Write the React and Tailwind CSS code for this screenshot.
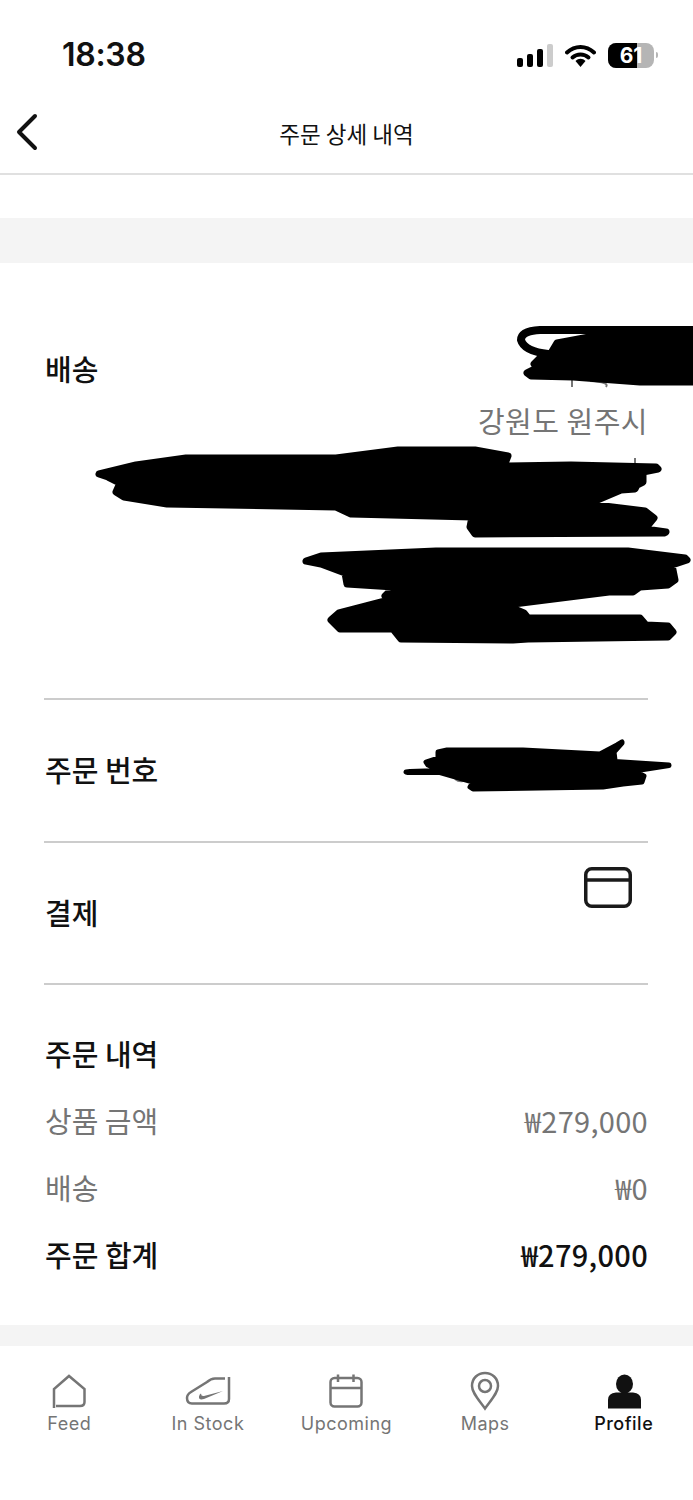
const gray = "#757575";

function StatusIcons() {
  return (
    <div className="flex items-center">
      <div className="flex items-end gap-[4px] h-[24px] mr-[12px]">
        <div className="w-[6px] h-[9px] rounded-[2px] bg-black" />
        <div className="w-[6px] h-[13px] rounded-[2px] bg-black" />
        <div className="w-[6px] h-[18px] rounded-[2px] bg-black" />
        <div className="w-[6px] h-[23px] rounded-[2px] bg-[#cccccc]" />
      </div>
      <svg width="31" height="23" viewBox="0 0 31 23" className="mr-[12px]">
        <path d="M2 8.5 C10 1 21 1 29 8.5" fill="none" stroke="#000" strokeWidth="4" strokeLinecap="round" />
        <path d="M7.5 13.5 C12 9.5 19 9.5 23.5 13.5" fill="none" stroke="#000" strokeWidth="4" strokeLinecap="round" />
        <path d="M10.5 17 C13.5 14 17.5 14 20.5 17 L15.5 23 Z" fill="#000" />
      </svg>
      <div className="relative w-[46px] h-[25px] rounded-[8px] bg-[#b5b5b5] overflow-hidden flex items-center justify-center">
        <div className="absolute left-0 top-0 bottom-0 w-[29px] bg-black" />
        <span className="relative text-white font-bold text-[21px] leading-none font-['Inter',sans-serif]">61</span>
      </div>
      <div className="w-[2px] h-[6px] ml-[2px] rounded-r-[2px] bg-[#b5b5b5]" />
    </div>
  );
}

function NavItem({ label, active, children }) {
  return (
    <div className="flex flex-col items-center">
      <div className="h-[42px] w-full flex items-center justify-center">{children}</div>
      <span className={`text-[18px] leading-[24px] tracking-[0.5px] font-['Inter',sans-serif] ${active ? "text-[#111111] font-medium" : "text-[#757575]"}`}>
        {label}
      </span>
    </div>
  );
}

const Home = () => (
  <svg width="36" height="36" viewBox="51 1373 36 36" fill="none" stroke={gray} strokeWidth="2.5">
    <path d="M54 1408 V1389 L69 1376 L84.5 1389 V1402 Q84.5 1406 80 1406 H56" />
  </svg>
);
const Shoe = () => (
  <svg width="48" height="32" viewBox="184 1375 48 32" fill="none" stroke={gray} strokeWidth="2.5">
    <path d="M225 1378.5 H215 Q211 1378.5 207 1382 L191 1392 Q187 1394.500 187 1398 Q187 1403.500 192 1403.500 H224 Q229 1403.500 229 1399 V1377" />
    <path d="M223 1391 L204 1399 Q198.500 1400.500 199 1396.500 Q199.500 1394 201 1393.500 Q201 1396.500 204 1396 Z" fill={gray} stroke="none" />
  </svg>
);
const Calendar = () => (
  <svg width="36" height="36" viewBox="328 1373 36 36" fill="none" stroke={gray} strokeWidth="2.5">
    <rect x="330.500" y="1378" width="31" height="28.500" rx="4" />
    <path d="M330.500 1388 H361.500 M338 1374.500 V1382 M353.500 1374.500 V1382" />
  </svg>
);
const Pin = () => (
  <svg width="32" height="40" viewBox="469 1371 32 40" fill="none" stroke={gray} strokeWidth="2.5">
    <path d="M485 1408.500 C479 1400 472 1393 472 1386 C472 1378 478 1373 485 1373 C492 1373 498 1378 498 1386 C498 1393 491 1400 485 1408.500 Z" />
    <circle cx="485" cy="1386" r="6" />
  </svg>
);
const Person = () => (
  <svg width="36" height="36" viewBox="605 1373 36 36" fill="#111111">
    <ellipse cx="623.500" cy="1384" rx="8.500" ry="9.500" />
    <path d="M607 1408.500 V1400 Q607 1393 615 1392.500 H632 Q640 1393 640 1400 V1408.500 Z" />
  </svg>
);

export default function App() {
  return (
    <div className="w-[693px] h-[1500px] bg-white flex flex-col overflow-hidden font-['Noto_Sans_CJK_KR','Noto_Sans',sans-serif] text-[#111111]">
      <div className="h-[110px] shrink-0 flex items-center justify-between pl-[62px] pr-[35px]">
        <span className="text-[32px] leading-none font-semibold tracking-[-0.3px] font-['Inter',sans-serif]">18:38</span>
        <StatusIcons />
      </div>

      <div className="h-[65px] shrink-0 border-b-2 border-[#e0e0e0] grid grid-cols-[1fr_auto_1fr] items-center pb-[18px]">
        <svg width="24" height="40" viewBox="0 0 24 40" fill="none" stroke="#111111" strokeWidth="4" strokeLinecap="round" strokeLinejoin="round" className="ml-[16px] -mt-[2px]">
          <path d="M19 4 L3 20 L19 36" />
        </svg>
        <h1 className="text-[22.5px] leading-[30px] font-normal">주문 상세 내역</h1>
        <div />
      </div>

      <div className="h-[43px] shrink-0" />
      <div className="h-[45px] shrink-0 bg-[#f4f4f4]" />

      <div className="relative h-[435px] shrink-0 px-[45px] flex justify-between items-start">
        <span className="mt-[85px] text-[29px] leading-[40px] font-medium">배송</span>
        <span className="mt-[137px] text-[29px] leading-[40px] text-[#757575] tracking-[0.5px]">강원도 원주시</span>
        <svg viewBox="0 263 693 435" width="693" height="435" className="absolute left-0 top-0" fill="#000" stroke="#000" strokeWidth="7" strokeLinejoin="round">
          <path d="M572 380 V387 M590 381 Q610 382 606 387" fill="none" stroke={gray} strokeWidth="2" />
          <path d="M635 458 V468" fill="none" stroke={gray} strokeWidth="2" />
          <path d="M693 330 H540 Q521 331 521 340 Q524 351 548 354" fill="none" strokeWidth="8" strokeLinecap="round" />
          <path d="M693 332 L600 335 L557 343 L551 353 L539 359 L534 364 L537 368 L527 373 L531 376 L573 377 L640 382 H693 Z" />
          <path d="M99 474 L136 465 L186 458 H336 L398 450 H475 L508 456 L504 466 L571 465 L656 467 L658 469 L643 472 L643 482 L637 485 L635 489 L621 490 L588 504 L645 511 L654 518 L645 529 L666 532 L664 533 L475 534 L470 527 L472 517 L351 514 L336 507 L167 504 L124 497 L116 492 L120 483 L108 477 Z" />
          <path d="M306 561 L321 556 L436 551 H628 L685 558 L687 560 L672 565 L675 580 L668 585 L640 587 L633 592 L609 592 L505 605 L524 613 L528 618 L640 618 L646 625 L668 626 L673 632 L668 637 L528 639 L513 640 L401 639 L393 629 L340 629 L331 620 L339 613 L389 600 L385 596 L394 587 L347 584 L345 573 L321 564 Z" />
        </svg>
      </div>

      <div className="mx-[44px] w-[604px] h-[2px] bg-[#cccccc] shrink-0" />

      <div className="relative h-[141px] shrink-0 px-[45px] pb-[3px] flex items-center">
        <span className="text-[29px] leading-[40px] font-medium">주문 번호</span>
        <svg viewBox="0 700 693 141" width="693" height="141" className="absolute left-0 top-0" fill="#000" stroke="#000" strokeWidth="5" strokeLinejoin="round">
          <path d="M455 779 Q460 783 466 780" fill="none" stroke={gray} strokeWidth="2" />
          <path d="M406 772 L410 771.500 L440 770.500 L428 765 L426 762 L438 758 L438 752 L447 750 H523 L600 754 L617 745 L622 742 L622 743 L614 752 L615 760 L607 761 L669 765 L669 765.500 L634 771 L644 776 L642 782 L623 784 L603 787 L473 789 L470 787 L473 782 L440 772.500 L408 772.500 Z" />
        </svg>
      </div>

      <div className="mx-[44px] w-[604px] h-[2px] bg-[#cccccc] shrink-0" />

      <div className="h-[140px] shrink-0 pl-[45px] pr-[61px] flex justify-between items-start">
        <span className="mt-[49px] text-[29px] leading-[40px] font-medium">결제</span>
        <svg width="48" height="41" viewBox="0 0 48 41" fill="none" stroke="#1a1a1a" strokeWidth="3.500" className="mt-[24px]">
          <rect x="1.750" y="1.750" width="44.500" height="37.500" rx="6" />
          <path d="M1.750 13 H46.250" />
        </svg>
      </div>

      <div className="mx-[44px] w-[604px] h-[2px] bg-[#cccccc] shrink-0" />

      <div className="h-[340px] shrink-0 px-[45px] pt-[48px] flex flex-col gap-[27px] text-[29px] leading-[40px]">
        <div className="font-medium">주문 내역</div>
        <div className="flex justify-between text-[#757575]">
          <span>상품 금액</span>
          <span className="tracking-[0.3px]">₩279,000</span>
        </div>
        <div className="flex justify-between text-[#757575]">
          <span>배송</span>
          <span className="tracking-[0.3px]">₩0</span>
        </div>
        <div className="flex justify-between font-medium">
          <span>주문 합계</span>
          <span className="tracking-[0.3px]">₩279,000</span>
        </div>
      </div>

      <div className="h-[21px] shrink-0 bg-[#f4f4f4]" />

      <nav className="flex-1 grid grid-cols-5 pt-[24px] content-start">
        <NavItem label="Feed"><Home /></NavItem>
        <NavItem label="In Stock"><Shoe /></NavItem>
        <NavItem label="Upcoming"><Calendar /></NavItem>
        <NavItem label="Maps"><Pin /></NavItem>
        <NavItem label="Profile" active><Person /></NavItem>
      </nav>
    </div>
  );
}
